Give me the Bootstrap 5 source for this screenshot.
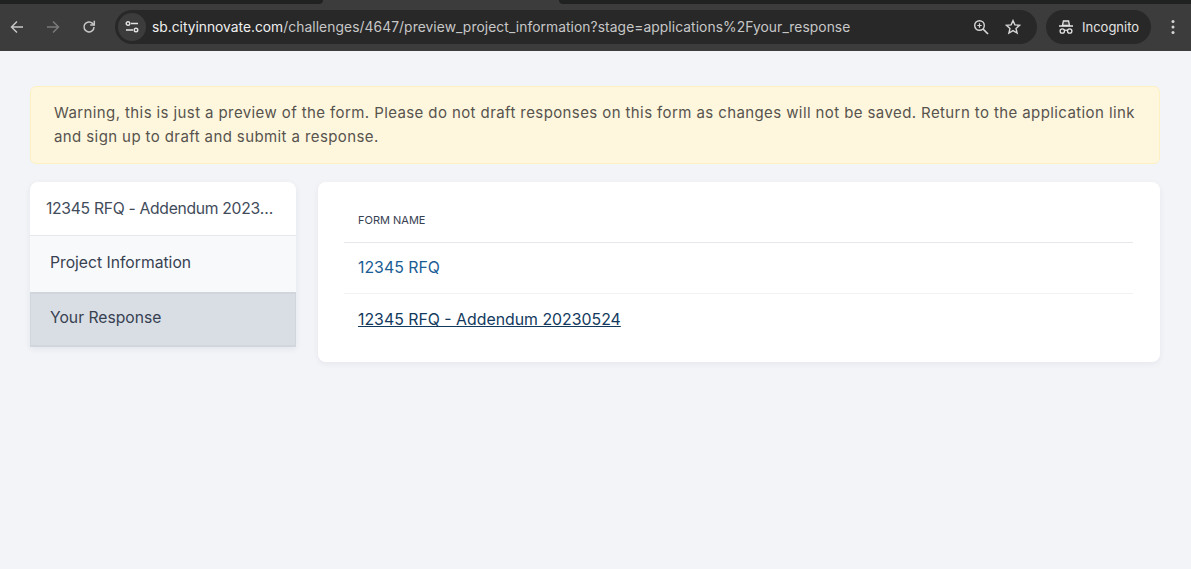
<!DOCTYPE html>
<html lang="en">
<head>
<meta charset="utf-8">
<title>Preview</title>
<link rel="stylesheet" href="https://cdn.jsdelivr.net/npm/bootstrap@5.3.0/dist/css/bootstrap.min.css">
<style>
html,body{height:569px;overflow:hidden}
body{background:#f2f4f8;font-family:Inter,"Liberation Sans",sans-serif;color:#374151}
.chrome-bar{height:51px;background:#3c3c3c;padding-top:4px;overflow:hidden}
.chrome-tabs{height:4px;margin-top:-4px;background:#3c3c3c}
.tab-a{width:323px;height:4px;background:#202221;border-radius:0 0 8px 0}
.tab-b{width:632px;height:4px;background:#202221;border-radius:0 0 0 8px;margin-left:auto}
.chrome-row{height:46px;padding:6px 0;margin-left:-1px}
.ic{display:block;flex:none}
.ic-gap{margin-left:16px}
.nav-slot{width:36px;display:flex;justify-content:center}
.omni{width:922px;height:34px;background:#282828;border-radius:17px;margin-left:8px;padding:0 16px 0 3px;color:#e3e3e3}
.tune{width:28px;height:28px;border-radius:50%;background:#3c3c3c;flex:none}
.url-text{margin-left:6px;font-size:13.8px;color:#c7c7c7;white-space:nowrap}
.url-host{color:#f0f0f0}
.url-path{letter-spacing:.08px}
.incog{width:105px;height:34px;background:#282828;border-radius:17px;margin-left:9px;color:#e3e3e3;font-size:13px;padding-left:12px;gap:8px}
.incog span{position:relative;top:1px}
.dots{margin-left:16px}
.page-wrap{padding:35px 31px 0 30px}
.warn-box{background:#fef7dd;border:1px solid #fdf1c4;border-radius:6px;padding:14px 23px 12px;height:78px;font-size:15px;line-height:24px;color:#57534e;letter-spacing:.4px;margin-bottom:18px}
.side-card{width:266px;flex:none;background:#fff;border-radius:8px 8px 0 0;box-shadow:0 2px 6px rgba(30,41,59,.07);height:165px;overflow:hidden;font-size:15.7px}
.side-head{height:54px;padding:0 18px 0 16px;line-height:53px;border-bottom:1px solid #e5e7eb;color:#414b5a;white-space:nowrap;overflow:hidden;text-overflow:ellipsis;letter-spacing:-.3px}
.side-link{display:block;height:56px;padding:0 20px;line-height:53px;background:#f8f9fb;color:#374151;text-decoration:none}
.side-link-on{height:55px;background:#d9dee5;border-top:2px solid #d1d5dc;border-bottom:2px solid #d1d5dc;border-left:1px solid #d1d5dc;border-right:1px solid #d1d5dc;padding-left:19px;line-height:47px}
.main-card{flex:1;margin-left:22px;height:180px;background:#fff;border-radius:8px;box-shadow:0 2px 6px rgba(30,41,59,.06);padding:0 27px 0 26px}
.col-head{height:61px;line-height:77px;padding-left:14px;font-size:11px;color:#374151;border-bottom:1px solid #e5e7eb}
.form-row{padding-left:14px;font-size:15.85px}
.form-row a{color:#1a5d95;text-decoration:none}
.row-one{height:51px;line-height:49px;border-bottom:1px solid #f1f2f4}
.row-two{line-height:51px}
.form-row .form-current{color:#133a5e;text-decoration:underline}
</style>
</head>
<body>
<div class="chrome-bar">
  <div class="chrome-tabs d-flex"><div class="tab-a"></div><div class="tab-b"></div></div>
  <div class="chrome-row d-flex align-items-center">
    <div class="nav-slot"><svg class="ic" width="16" height="16" viewBox="0 0 16 16" fill="none" stroke="#c7c7c7" stroke-width="1.5"><path d="M14 8H2.500M8 2.500 2.500 8 8 13.500"/></svg></div>
    <div class="nav-slot"><svg class="ic" width="16" height="16" viewBox="0 0 16 16" fill="none" stroke="#7a7a7a" stroke-width="1.5"><path d="M2 8h11.500M8 2.500 13.500 8 8 13.500"/></svg></div>
    <div class="nav-slot"><svg class="ic" width="16" height="16" viewBox="0 0 16 16" fill="none" stroke="#c7c7c7" stroke-width="1.5"><path d="M13 8a5 5 0 1 1-1.500-3.600L13.200 6"/><path d="M13.300 1.800V6H9.200"/></svg></div>
    <div class="omni d-flex align-items-center">
      <div class="tune d-flex align-items-center justify-content-center">
        <svg class="ic" width="14" height="12" viewBox="0 0 14 12" fill="none" stroke="#e3e3e3" stroke-width="1.400"><circle cx="3" cy="2.500" r="1.800"/><path d="M6 2.500h7M1 9h7"/><circle cx="11" cy="9" r="1.800"/></svg>
      </div>
      <div class="url-text flex-grow-1"><span class="url-host">sb.cityinnovate.com</span><span class="url-path">/challenges/4647/preview_project_information?stage=applications%2Fyour_response</span></div>
      <svg class="ic" width="16" height="16" viewBox="0 0 16 16" fill="none" stroke="#d6d6d6" stroke-width="1.400"><circle cx="6.500" cy="6.500" r="4.800"/><path d="M10 10l5 5" stroke-width="1.700"/><path d="M4.300 6.500h4.400M6.500 4.300v4.400" stroke-width="1.200"/></svg>
      <svg class="ic ic-gap" width="16" height="16" viewBox="0 0 16 16" fill="none" stroke="#d6d6d6" stroke-width="1.400"><path d="M8 1.600l1.900 4.300 4.700.4-3.600 3.100 1.100 4.600L8 11.600 3.900 14l1.100-4.600-3.600-3.100 4.700-.4z"/></svg>
    </div>
    <div class="incog d-flex align-items-center">
      <svg class="ic" width="16" height="16" viewBox="0 0 16 16" fill="none" stroke="#e3e3e3" stroke-width="1.300"><path d="M4.500 6.500 5.400 2h5.200l.9 4.500z" fill="#e3e3e3" fill-opacity=".15"/><path d="M1 7h14" stroke-width="1.500"/><circle cx="4.300" cy="12" r="2.200"/><circle cx="11.700" cy="12" r="2.200"/><path d="M6.500 11.500c1-.6 2-.6 3 0"/></svg>
      <span>Incognito</span>
    </div>
    <svg class="ic dots" width="12" height="16" viewBox="0 0 12 16" fill="#d6d6d6"><circle cx="6" cy="2.500" r="1.500"/><circle cx="6" cy="8" r="1.500"/><circle cx="6" cy="13.500" r="1.500"/></svg>
  </div>
</div>
<div class="page-wrap">
  <div class="warn-box">Warning, this is just a preview of the form. Please do not draft responses on this form as changes will not be saved. Return to the application link and sign up to draft and submit a response.</div>
  <div class="d-flex align-items-start">
    <div class="side-card">
      <div class="side-head">12345 RFQ - Addendum 20230524</div>
      <a class="side-link" href="#">Project Information</a>
      <a class="side-link side-link-on" href="#">Your Response</a>
    </div>
    <div class="main-card">
      <div class="col-head">FORM NAME</div>
      <div class="form-row row-one"><a href="#">12345 RFQ</a></div>
      <div class="form-row row-two"><a class="form-current" href="#">12345 RFQ - Addendum 20230524</a></div>
    </div>
  </div>
</div>
</body>
</html>
